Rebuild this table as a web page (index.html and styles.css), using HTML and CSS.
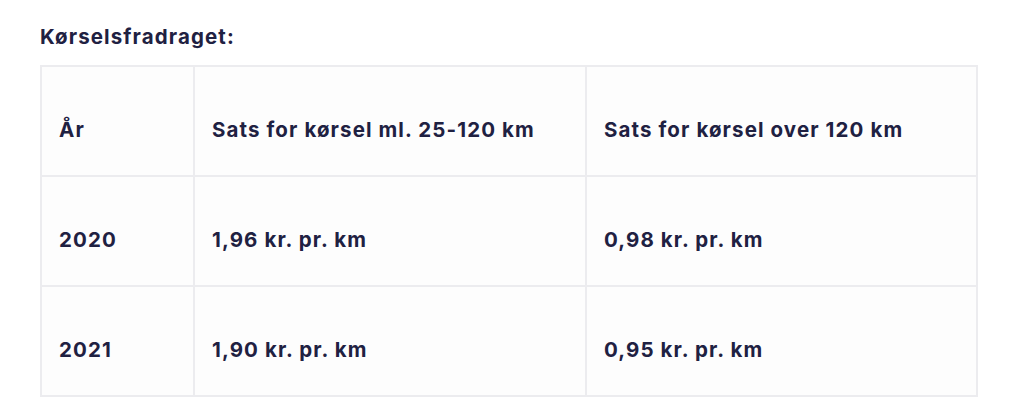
FILE: index.html
```html
<!DOCTYPE html>
<html lang="da">
<head>
<meta charset="utf-8">
<link rel="stylesheet" href="styles.css">
</head>
<body>
<div class="wrap">
  <h3 class="title">Kørselsfradraget:</h3>
  <table class="rates">
    <tr><td class="c1">År</td><td class="c2">Sats for kørsel ml. 25-120 km</td><td>Sats for kørsel over 120 km</td></tr>
    <tr><td class="c1">2020</td><td class="c2">1,96 kr. pr. km</td><td>0,98 kr. pr. km</td></tr>
    <tr><td class="c1">2021</td><td class="c2">1,90 kr. pr. km</td><td>0,95 kr. pr. km</td></tr>
  </table>
</div>
</body>
</html>
```
FILE: styles.css
```css
html, body { margin: 0; padding: 0; background: #ffffff; }
body { font-family: Inter, "Noto Sans", sans-serif; color: #1f2142; }
.wrap { padding: 24px 0 0 40px; width: 938px; }
.title { margin: 0 0 15px 0; font-size: 20.5px; font-weight: 700; line-height: 26px; letter-spacing: 1.1px; }
.rates { border-collapse: collapse; width: 938px; background: #fdfdfd; }
.rates td { border: 2px solid #ececef; height: 91px; padding: 17px 0 0 17px; font-size: 20.5px; font-weight: 700; letter-spacing: 1.1px; vertical-align: middle; }
.rates .c1 { width: 134px; }
.rates .c2 { width: 373px; }
```
